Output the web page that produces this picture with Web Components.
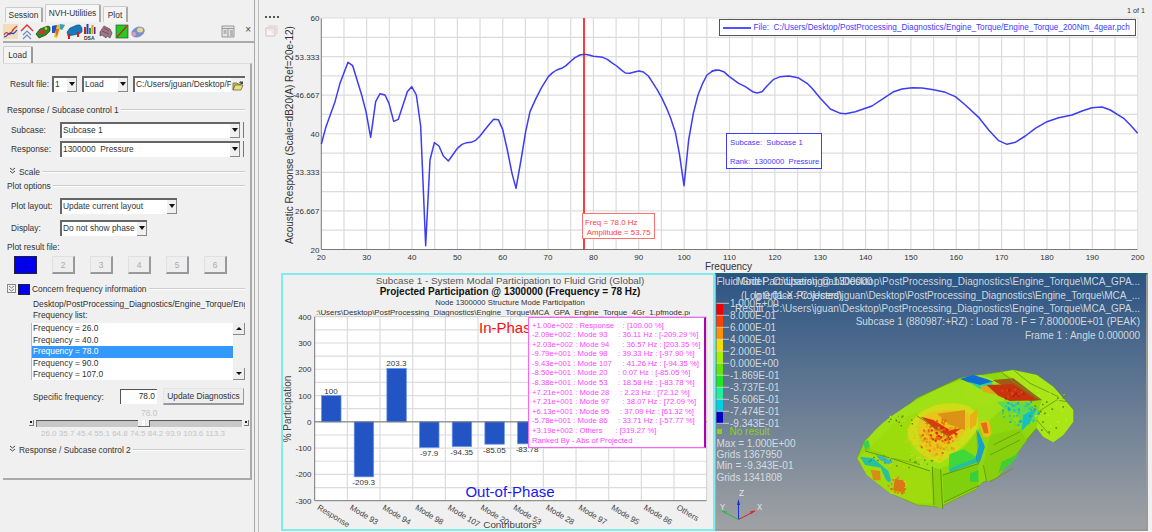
<!DOCTYPE html>
<html>
<head>
<meta charset="utf-8">
<title>NVH Utilities</title>
<style>
  html, body { margin: 0; height: 532px; overflow: hidden; background: #f0f0f0; }
  body { font-family: "Liberation Sans", Arial, sans-serif; font-size: 8.400px; color: #333; }
</style>
</head>
<body>
<hw-app>
  <hw-sidebar slot="side">
    <hw-field style="margin:12px 0 0 7px" label-width="42">Result file:
      <div slot="control" style="display:flex;gap:5px">
        <hw-select style="width:25px">1</hw-select>
        <hw-select style="width:46px">Load</hw-select>
        <hw-file-input style="width:112px">C:/Users/jguan/Desktop/P</hw-file-input>
      </div>
    </hw-field>
    <hw-group style="margin-top:12px">Response / Subcase control 1</hw-group>
    <hw-field style="margin:6px 0 0 8px" label-width="49">Subcase:
      <hw-select slot="control" ext style="width:180px">Subcase 1</hw-select>
    </hw-field>
    <hw-field style="margin:3px 0 0 8px" label-width="49">Response:
      <hw-select slot="control" ext style="width:180px">1300000&nbsp; Pressure</hw-select>
    </hw-field>
    <hw-group collapsed style="margin-top:9px">Scale</hw-group>
    <hw-group style="margin-top:2px">Plot options</hw-group>
    <hw-field style="margin:6px 0 0 8px" label-width="49">Plot layout:
      <hw-select slot="control" style="width:117px">Update current layout</hw-select>
    </hw-field>
    <hw-field style="margin:6px 0 0 8px" label-width="49">Display:
      <hw-select slot="control" style="width:87px">Do not show phase</hw-select>
    </hw-field>
    <hw-group style="margin-top:5px" plain>Plot result file:</hw-group>
    <hw-result-buttons style="margin-top:3px"></hw-result-buttons>
    <hw-group checkable style="margin-top:9px">Concern frequency information</hw-group>
    <hw-clipped style="margin:4px 0 0 30px;width:212px">Desktop/PostProcessing_Diagnostics/Engine_Torque/Eng</hw-clipped>
    <hw-clipped style="margin:0 0 0 30px;height:10px;line-height:10px;width:100px">Frequency list:</hw-clipped>
    <hw-freq-list style="margin:3px 0 0 28px"></hw-freq-list>
    <hw-specific-row style="margin:8px 0 0 30px"></hw-specific-row>
    <hw-freq-slider style="margin:3px 0 0 26px"></hw-freq-slider>
    <hw-group collapsed style="margin-top:5px">Response / Subcase control 2</hw-group>
  </hw-sidebar>
  <hw-response-plot slot="top"></hw-response-plot>
  <hw-participation-plot slot="left"></hw-participation-plot>
  <hw-contour-view slot="right"></hw-contour-view>
</hw-app>

<script>
class HwElement extends HTMLElement {
  constructor() {
    super();
    this.attachShadow({ mode: 'open' }).innerHTML = this.render();
  }
  render() { return ''; }
}

const toolbarIcons = `
  <svg width="150" height="17" viewBox="0 0 150 17">
    <rect x="3" y="1" width="15" height="15" fill="#f3dcb8"/>
    <path d="M4 12c3-6 5 2 7-2s3-5 6-7" fill="none" stroke="#e03020" stroke-width="1.2"/>
    <path d="M4 14c3 0 5-5 7-4s3 1 6-3" fill="none" stroke="#2040d0" stroke-width="1.2"/>
    <path d="M21 8l6-6 6 6" fill="none" stroke="#d83030" stroke-width="1.4"/>
    <path d="M23 12l4-4 4 4M23 16l4-4 4 4" fill="none" stroke="#7088c8" stroke-width="1.2"/>
    <path d="M36 11l4-5 8-3 2 1v4l-4 4-7 3z" fill="#2f8a22" stroke="#164010" stroke-width=".7"/>
    <ellipse cx="42" cy="9" rx="3" ry="2" fill="#d83030"/><circle cx="46" cy="5.500" r="1.200" fill="#e8d020"/>
    <path d="M52 3l9-2 4 1-3 5-2-1-3 9-3-1 1-5-3 0z" fill="#e8c020"/>
    <path d="M52 3l5-1-2 8-3 0z" fill="#2050d0"/><path d="M60 1l5 1-3 5-2-1z" fill="#30a0d0"/><path d="M56 6l3 0-2 7-1-1z" fill="#e07010"/>
    <path d="M67 9l3-4 7-3 3 0 2 3 0 4-3 2-11 2z" fill="#1878b8" stroke="#0a4a80" stroke-width=".6"/>
    <rect x="68" y="11" width="2" height="5" fill="#d02020"/><rect x="77" y="9" width="2" height="5" fill="#d02020"/>
    <rect x="84" y="4" width="2" height="7" fill="#d02020"/><rect x="86.500" y="1" width="2" height="10" fill="#2040c0"/><rect x="89" y="5" width="2" height="6" fill="#20a040"/><rect x="91.500" y="2" width="2" height="9" fill="#e0a010"/><rect x="94" y="4" width="1.500" height="7" fill="#6020a0"/>
    <text x="84" y="16.500" font-size="5" font-weight="700" fill="#333" font-family="Liberation Sans">DSA</text>
    <path d="M100 9l4-6 6 3 2 4-2 5-3-2-1 2-4-3-2 1z" fill="#8a7f88" stroke="#503040" stroke-width=".6"/>
    <path d="M102 8l7 3M104 5l5 3" stroke="#c03040" stroke-width="1"/>
    <rect x="116" y="2" width="12" height="13" fill="#22cc22" stroke="#333" stroke-width=".6"/><path d="M117 14L127 3" stroke="#d02020" stroke-width="1.200"/>
    <ellipse cx="138" cy="9" rx="7" ry="5" fill="#7a90c8" transform="rotate(-25 138 9)"/>
    <ellipse cx="140" cy="7" rx="3" ry="2.500" fill="#e8d890"/><ellipse cx="134" cy="11" rx="2" ry="2" fill="#e0a0b0"/>
  </svg>`;

class HwSidebar extends HwElement {
  render() {
    return `
    <style>
      :host { display: block; height: 532px; font-size: 8.400px; color: #333; position: relative; }
      .tabs { display: flex; align-items: flex-end; gap: 2px; height: 22px; padding-left: 5px; box-sizing: border-box; }
      .tab { border: 1px solid #ccc; border-bottom: 0; border-right: 2px solid #aaa; border-radius: 2px 2px 0 0; background: #f4f4f4; box-sizing: border-box; font-size: 8.400px; white-space: nowrap; text-align: center; }
      .tab.s { width: 38px; height: 15px; line-height: 15px; }
      .tab.n { width: 56px; height: 18px; line-height: 17px; background: #f7f7f7; }
      .tab.p { width: 25px; height: 16px; line-height: 16px; }
      .toolbar { height: 19px; width: 250px; border-bottom: 2px solid #aaa; margin-left: 3px; display: flex; align-items: center; justify-content: space-between; padding-right: 2px; box-sizing: content-box; }
      .toolbar svg { display: block; margin-left: -3px; }
      .tool-end { display: flex; align-items: center; gap: 10px; padding-right: 2px; }
      .close { font-size: 10px; color: #444; line-height: 10px; margin-top: -4px; }
      .loadtab { margin: 3px 0 0 3px; width: 30px; height: 17px; line-height: 17px; text-align: center; border: 1px solid #ccc; border-bottom: 0; border-right: 2px solid #999; box-sizing: border-box; border-radius: 2px 2px 0 0; background: #f4f4f4; }
      .frame { margin-left: 3px; width: 249px; height: 417px; box-sizing: border-box; border-top: 1px solid #ddd; border-right: 2px solid #aaa; border-bottom: 2px solid #aaa; display: flex; flex-direction: column; padding-right: 5px; }
      .rails { position: absolute; left: 254px; top: 0; width: 5px; height: 532px; border-left: 1px solid #aaa; border-right: 1px solid #bbb; box-sizing: border-box; }
    </style>
    <div class="tabs">
      <div class="tab s">Session</div>
      <div class="tab n">NVH-Utilities</div>
      <div class="tab p">Plot</div>
    </div>
    <div class="toolbar">
      ${toolbarIcons}
      <div class="tool-end">
        <svg width="14" height="13" viewBox="0 0 14 13"><path d="M1 1h12v11H1z" fill="#e4e4e4" stroke="#999"/><path d="M1 3.500h12M7 3.500V12" stroke="#999"/><path d="M9 6h3M9 8h3M9 10h3M2.500 6h3M2.500 8h3" stroke="#888"/></svg>
        <span class="close">×</span>
      </div>
    </div>
    <div class="loadtab">Load</div>
    <div class="frame"><slot></slot></div>
    <div class="rails"></div>`;
  }
}

class HwField extends HwElement {
  render() {
    const w = this.getAttribute('label-width') || 49;
    return `
    <style>
      :host { display: flex; align-items: center; height: 16px; }
      .label { width: ${w}px; flex: none; white-space: nowrap; }
    </style>
    <span class="label"><slot></slot></span>
    <slot name="control"></slot>`;
  }
}

class HwSelect extends HwElement {
  render() {
    return `
    <style>
      :host { display: inline-flex; height: 16px; box-sizing: border-box; background: #fff; border-top: 2px solid #666; border-left: 2px solid #666; white-space: nowrap; overflow: hidden; line-height: 13px; padding-left: 1px; flex: none; }
      :host([ext]) { box-shadow: 3px 0 0 #f0f0f0, 4px 0 0 #777; overflow: visible; }
      .t { flex: 1; overflow: hidden; }
      .b { width: 10px; flex: none; background: #f0f0f0; border-right: 1px solid #888; border-bottom: 1px solid #888; position: relative; box-sizing: border-box; }
      .b::after { content: ""; position: absolute; left: 2px; top: 4px; border: 3px solid transparent; border-top: 4px solid #111; border-bottom: 0; }
    </style>
    <span class="t"><slot></slot></span><span class="b"></span>`;
  }
}

class HwFileInput extends HwElement {
  render() {
    return `
    <style>
      :host { display: inline-flex; height: 16px; box-sizing: border-box; background: #fff; border-top: 2px solid #666; border-left: 2px solid #666; white-space: nowrap; overflow: hidden; line-height: 13px; padding-left: 1px; flex: none; }
      .t { flex: 1; overflow: hidden; }
      .b { width: 14px; flex: none; background: #f0f0f0; display: flex; align-items: center; justify-content: center; }
    </style>
    <span class="t"><slot></slot></span>
    <span class="b"><svg width="12" height="11" viewBox="0 0 12 11"><path d="M1 3h4l1 1h3v2H3L1 10z" fill="#d8c040" stroke="#555" stroke-width=".7"/><path d="M1 10l2-5h8l-2 5z" fill="#f0e070" stroke="#555" stroke-width=".7"/><path d="M7 3c1-2 2-2 3-1l1-1v3H8l1-1c-1-.5-1 0-2 0z" fill="#444"/></svg></span>`;
  }
}

class HwGroup extends HwElement {
  render() {
    const chev = this.hasAttribute('collapsed')
      ? '<svg class="lead" width="7" height="8" viewBox="0 0 7 8"><path d="M1 1l2.500 2L6 1M1 4l2.500 2L6 4" fill="none" stroke="#444"/></svg>' : '';
    const check = this.hasAttribute('checkable')
      ? '<span class="ck"><svg width="7" height="7" viewBox="0 0 7 7"><path d="M1 1l2.500 2L6 1M1 4l2.500 2L6 4" fill="none" stroke="#666" stroke-width=".8"/></svg></span><span class="sw"></span>' : '';
    return `
    <style>
      :host { display: flex; align-items: center; height: 12px; padding-left: 4px; white-space: nowrap; }
      .lead { margin: -2px 3px 0 2px; }
      .ck { width: 7px; height: 7px; border: 1px solid #888; margin-right: 2px; display: flex; margin-top: -1px; }
      .sw { width: 10px; height: 9px; background: #0000f0; border: 1px solid #223; margin-right: 2px; }
      .line { flex: 1; height: 0; border-top: 1px solid #ccc; border-bottom: 1px solid #fff; margin-left: 2px; }
    </style>
    ${chev}${check}<slot></slot>${this.hasAttribute('plain') ? '' : '<span class="line"></span>'}`;
  }
}

class HwResultButtons extends HwElement {
  render() {
    const btns = [1, 2, 3, 4, 5, 6].map((n) => `<span class="b${n === 1 ? ' on' : ''}">${n}</span>`).join('');
    return `
    <style>
      :host { display: flex; gap: 15px; padding-left: 11px; }
      .b { width: 23px; height: 18px; line-height: 17px; text-align: center; box-sizing: border-box; background: #eee; border: 1px solid #e0e0e0; border-right: 2px solid #999; border-bottom: 2px solid #999; color: #aaa; }
      .b.on { background: #0000f0; color: #000070; border: 1px solid #223; }
    </style>${btns}`;
  }
}

class HwClipped extends HwElement {
  render() {
    return `<style>:host { display: block; height: 11px; line-height: 11px; overflow: hidden; white-space: nowrap; }</style><slot></slot>`;
  }
}

class HwFreqList extends HwElement {
  render() {
    const items = ['26.0', '40.0', '78.0', '90.0', '107.0']
      .map((f) => `<div class="i${f === '78.0' ? ' on' : ''}">Frequency = ${f}</div>`).join('');
    return `
    <style>
      :host { display: flex; width: 214px; height: 57px; background: #fff; border-left: 1px solid #bbb; box-sizing: border-box; }
      .items { flex: 1; }
      .i { height: 11.500px; line-height: 11.500px; padding-left: 1px; }
      .on { background: #3399ff; color: #fff; }
      .sb { width: 12px; background: #f0f0f0; display: flex; flex-direction: column; justify-content: space-between; }
      .arr { height: 12px; background: #eee; border-right: 1px solid #888; border-bottom: 1px solid #888; box-sizing: border-box; position: relative; }
      .arr::after { content: ""; position: absolute; left: 3px; top: 4px; border: 3px solid transparent; }
      .up::after { border-bottom: 3px solid #111; border-top: 0; }
      .dn::after { border-top: 3px solid #111; border-bottom: 0; }
    </style>
    <div class="items">${items}</div>
    <div class="sb"><div class="arr up"></div><div class="arr dn"></div></div>`;
  }
}

class HwSpecificRow extends HwElement {
  render() {
    return `
    <style>
      :host { display: flex; align-items: center; height: 17px; }
      .l { width: 87px; }
      .v { width: 37px; height: 15px; box-sizing: border-box; line-height: 13px; text-align: right; padding-right: 2px; background: #fff; border-top: 1px solid #555; border-left: 1px solid #555; }
      .btn { margin-left: 6px; width: 81px; height: 17px; line-height: 15px; text-align: center; box-sizing: border-box; background: #eee; border: 1px solid #e4e4e4; border-right: 1px solid #999; border-bottom: 2px solid #999; white-space: nowrap; }
    </style>
    <span class="l">Specific frequency:</span><span class="v">78.0</span><span class="btn">Update Diagnostics</span>`;
  }
}

class HwFreqSlider extends HwElement {
  render() {
    const ticks = ['26.0', '35.7', '45.4', '55.1', '64.8', '74.5', '84.2', '93.9', '103.6', '113.3']
      .map((t) => `<span>${t}</span>`).join('');
    return `
    <style>
      :host { display: block; width: 220px; color: #c4c4c4; }
      .cur { height: 11px; line-height: 11px; padding-left: 112px; }
      .track { display: flex; align-items: center; gap: 2px; height: 8px; }
      .ar { width: 5px; height: 6px; background: #eee; border-right: 1px solid #777; border-bottom: 1px solid #777; box-sizing: border-box; position: relative; }
      .ar::after { content: ""; position: absolute; left: 1px; top: 1px; border: 1.500px solid #222; }
      .bar { flex: 1; height: 7px; background: #c8c8c8; border-top: 1px solid #555; border-left: 1px solid #777; box-sizing: border-box; position: relative; }
      .thumb { position: absolute; left: 101px; top: -1px; width: 12px; height: 7px; background: linear-gradient(90deg, #eee 40%, #fff 40%, #fff 60%, #999 60%, #eee 70%); border-right: 1px solid #666; border-bottom: 1px solid #666; box-sizing: border-box; }
      .ticks { display: flex; justify-content: space-between; width: 184px; margin: 2px 0 0 12px; height: 10px; line-height: 10px; font-size: 8px; }
    </style>
    <div class="cur">78.0</div>
    <div class="track"><span class="ar"></span><div class="bar"><span class="thumb"></span></div><span class="ar"></span></div>
    <div class="ticks">${ticks}</div>`;
  }
}

// curve traced from the reference, in 3x crop coordinates
const curveLeft = [[124,432],[138,380],[165,305],[180,250],[204,187],[218,197],[245,285],[258,335],[272,412],[287,305],[300,281],[315,285],[327,310],[341,364],[355,358],[368,318],[382,275],[395,260],[409,285],[422,378],[437,737],[450,480],[463,428],[477,438],[490,468],[505,483],[518,465],[532,445],[546,433],[560,428],[573,427],[587,421],[600,408],[614,390],[628,373],[641,358],[655,359],[668,388],[682,450],[696,520],[708,565],[723,480],[737,395],[750,335],[768,295],[785,262],[805,230],[818,218],[830,210],[845,205],[858,197],[873,183],[885,173],[900,165],[913,163],[927,165],[940,169],[955,170],[968,172],[982,178],[995,188],[1010,198],[1022,208],[1036,219],[1050,220],[1063,216],[1077,213],[1090,216],[1105,228],[1118,248],[1131,268],[1145,293],[1160,325],[1172,355],[1186,397],[1198,460],[1212,557],[1226,420],[1240,340],[1254,285],[1268,250],[1281,225],[1295,215],[1308,210]];
const curveRight = [[0,213],[20,210],[35,215],[52,230],[80,250],[100,260],[122,275],[135,279],[150,275],[165,258],[185,238],[205,230],[230,228],[258,233],[285,250],[300,265],[325,295],[355,327],[385,340],[400,341],[430,335],[460,325],[480,318],[510,298],[545,275],[570,267],[600,263],[630,264],[665,269],[700,277],[730,290],[760,315],[800,352],[830,390],[860,422],[885,433],[910,427],[940,408],[970,385],[1005,365],[1040,353],[1080,345],[1110,333],[1140,323],[1170,321],[1195,330],[1235,355],[1255,375],[1277,400]];

class HwResponsePlot extends HwElement {
  render() {
    const x0 = 321.3, x1 = 1137.7, y0 = 18, y1 = 249.5;
    let grid = '';
    for (let f = 25; f < 200; f += 5) {
      const x = x0 + (f - 20) * (x1 - x0) / 180;
      grid += `<line x1="${x}" x2="${x}" y1="${y0}" y2="${y1}"/>`;
    }
    for (let i = 1; i < 12; i++) {
      const y = y0 + i * (y1 - y0) / 12;
      grid += `<line x1="${x0}" x2="${x1}" y1="${y}" y2="${y}"/>`;
    }
    let xLabels = '';
    for (let f = 20; f <= 200; f += 10) {
      xLabels += `<text x="${x0 + (f - 20) * (x1 - x0) / 180}" y="260" text-anchor="middle">${f}</text>`;
    }
    const yLabels = ['60', '53.333', '46.667', '40', '33.333', '26.667', '20']
      .map((t, i) => `<text x="319.500" y="${y0 + 3 + i * (y1 - y0) / 6}" text-anchor="end">${t}</text>`).join('');
    const pts = curveLeft.map(([x, y]) => `${280 + x / 3},${y / 3}`)
      .concat(curveRight.map(([x, y]) => `${712 + x / 3},${y / 3}`)).join(' ');
    return `
    <style>
      :host { display: block; position: relative; height: 273px; font-family: "Liberation Sans", Arial, sans-serif; }
      svg { display: block; font-size: 8px; fill: #333; }
      .grid line { stroke: #dcdcdc; stroke-width: 1.200; }
      .legend { position: absolute; left: 437.500px; top: 19px; width: 417px; height: 17px; box-sizing: border-box; background: #fff; border: 1px solid #555; color: #3c3cff; font-size: 8.200px; line-height: 15px; display: flex; align-items: center; white-space: nowrap; }
      .legend i { width: 28px; height: 2px; background: #5050ff; margin: 0 3px 0 3px; }
      .note { position: absolute; left: 445px; top: 133px; width: 96px; height: 36px; box-sizing: border-box; background: #fff; border: 1px solid #3c3cff; color: #3c3cff; font-size: 7.700px; padding: 3.500px 3px; line-height: 9.500px; white-space: pre; }
      .marker { position: absolute; left: 301px; top: 213px; width: 73px; height: 26px; box-sizing: border-box; background: #fff; border: 1px solid #ff7070; color: #ff4040; font-size: 7.900px; padding: 4px 0 0 2px; line-height: 9.500px; white-space: pre; }
    </style>
    <svg width="871" height="273" viewBox="281 0 871 273">
      <rect x="${x0}" y="${y0}" width="${x1 - x0}" height="${y1 - y0}" fill="#fff"/>
      <g class="grid">${grid}</g>
      <path d="M${x0} ${y0}V${y1}H${x1}" fill="none" stroke="#777"/>
      <path d="M${x0} ${y0}H${x1}V${y1}" fill="none" stroke="#ddd"/>
      <polyline points="${pts}" fill="none" stroke="#3c3cf5" stroke-width="1.500" stroke-linejoin="round"/>
      <line x1="584" x2="584" y1="${y0}" y2="${y1}" stroke="#f01010" stroke-width="1.600"/>
      ${yLabels}${xLabels}
      <text x="728.500" y="270" text-anchor="middle" font-size="10">Frequency</text>
      <text x="1127" y="12.500" font-size="7.200">1 of 1</text>
      <text transform="translate(293 135) rotate(-90)" text-anchor="middle" font-size="10">Acoustic Response (Scale=dB20(A) Ref=20e-12)</text>
    </svg>
    <div class="legend"><i></i>File:&nbsp; C:/Users/Desktop/PostProcessing_Diagnostics/Engine_Torque/Engine_Torque_200Nm_4gear.pch</div>
    <div class="note">Subcase:  Subcase 1

Rank:  1300000  Pressure</div>
    <div class="marker">Freq = 78.0 Hz
 Amplitude = 53.75</div>`;
  }
}

const contributors = [
  ['Response', 100, '100'], ['Mode 93', -209.3, '-209.3'], ['Mode 94', 203.3, '203.3'],
  ['Mode 98', -97.9, '-97.9'], ['Mode 107', -94.35, '-94.35'], ['Mode 20', -85.05, '-85.05'],
  ['Mode 53', -83.78, '-83.78'], ['Mode 28', 72.12, ''], ['Mode 97', 72.09, ''],
  ['Mode 95', 61.32, ''], ['Mode 86', -57.77, ''], ['Others', 319.27, ''],
];

class HwParticipationPlot extends HwElement {
  render() {
    const x0 = 314.7, x1 = 706.7, y0 = 316.7, y1 = 500.7;
    const step = (x1 - x0) / 12;
    const yOf = (v) => y0 + (400 - v) * (y1 - y0) / 700;
    let grid = '';
    let ticks = '';
    for (let i = 1; i < 12; i++) {
      grid += `<line x1="${x0 + i * step}" x2="${x0 + i * step}" y1="${y0}" y2="${y1}"/>`;
    }
    for (let v = 350; v > -300; v -= 50) {
      grid += `<line x1="${x0}" x2="${x1}" y1="${yOf(v)}" y2="${yOf(v)}"/>`;
    }
    for (let v = 400; v >= -300; v -= 100) {
      ticks += `<text x="311.500" y="${yOf(v) + 3}" text-anchor="end">${v}</text>`;
    }
    const bars = contributors.map(([name, v, label], i) => {
      if (i > 6) return '';
      const cx = x0 + (i + 0.5) * step;
      const top = Math.min(yOf(v), yOf(0));
      const h = Math.abs(yOf(v) - yOf(0));
      const ly = v > 0 ? top - 2 : top + h + 8.500;
      return `<rect x="${cx - 9.500}" y="${top}" width="19.500" height="${h}" fill="#2254c4" stroke="#6a98e8" stroke-width=".7"/>
        <text x="${cx}" y="${ly}" text-anchor="middle">${label}</text>`;
    }).join('');
    const names = contributors.map(([name], i) => {
      const x = x0 + i * step + 2;
      return `<text transform="translate(${x} 509) rotate(31)" font-size="8" fill="#444">${name}</text>`;
    }).join('');
    return `
    <style>
      :host { display: block; position: relative; height: 258px; box-sizing: border-box; border: 2px solid #80ecee; font-family: "Liberation Sans", Arial, sans-serif; overflow: hidden; }
      svg { display: block; font-size: 8px; fill: #333; }
      .grid line { stroke: #dcdcdc; stroke-width: 1.200; }
      .box { position: absolute; left: 245px; top: 42px; width: 178px; height: 131px; box-sizing: border-box; background: #fff; border: 1px solid #ff60ff; border-right: 2px solid #b000b0; color: #ff44ff; font-size: 7.700px; line-height: 9.600px; padding: 2.500px 0 0 3px; white-space: pre; overflow: hidden; }
    </style>
    <svg width="430" height="254" viewBox="283 275 430 254">
      <defs><clipPath id="pathclip"><rect x="283" y="306" width="407" height="12"/></clipPath></defs>
      <rect x="${x0}" y="${y0}" width="${x1 - x0}" height="${y1 - y0}" fill="#fff"/>
      <g class="grid">${grid}</g>
      <text x="510" y="283.500" text-anchor="middle" font-size="9.850" fill="#555">Subcase 1 - System Modal Participation to Fluid Grid (Global)</text>
      <text x="510" y="294.800" text-anchor="middle" font-size="10" font-weight="700" fill="#111">Projected Participation @ 1300000 (Frequency = 78 Hz)</text>
      <text x="510" y="305" text-anchor="middle" font-size="7.700">Node 1300000 Structure Mode Participation</text>
      <text x="316" y="315" font-size="7.900" clip-path="url(#pathclip)">:\\Users\\Desktop\\PostProcessing_Diagnostics\\Engine_Torque\\MCA_GPA_Engine_Torque_4Gr_1.pfmode.pch</text>
      <path d="M${x0} ${y0}V${y1}H${x1}" fill="none" stroke="#777"/>
      <path d="M${x0} ${y0}H${x1}V${y1}" fill="none" stroke="#ccc"/>
      ${bars}
      <line x1="${x0}" x2="${x1}" y1="${yOf(0)}" y2="${yOf(0)}" stroke="#777"/>
      ${ticks}
      <text x="479" y="332.500" font-size="15" fill="#f01010">In-Phase</text>
      <text x="510" y="496.500" text-anchor="middle" font-size="15" fill="#1818f0">Out-of-Phase</text>
      ${names}
      <text x="510" y="527.500" text-anchor="middle" font-size="9.800" fill="#444">Contributors</text>
      <text transform="translate(291 409) rotate(-90)" text-anchor="middle" font-size="10" fill="#444">% Participation</text>
    </svg>
    <div class="box">+1.00e+002 : Response    : [100.00 %]
-2.09e+002 : Mode 93     : 36.11 Hz : [-209.29 %]
+2.03e+002 : Mode 94      : 36.57 Hz : [203.35 %]
-9.79e+001 : Mode 98     : 39.33 Hz : [-97.90 %]
-9.43e+001 : Mode 107     : 41.26 Hz : [-94.35 %]
-8.50e+001 : Mode 20     : 0.07 Hz : [-85.05 %]
-8.38e+001 : Mode 53     : 18.58 Hz : [-83.78 %]
+7.21e+001 : Mode 28     : 2.23 Hz : [72.12 %]
+7.21e+001 : Mode 97      : 38.07 Hz : [72.09 %]
+6.13e+001 : Mode 95     : 37.09 Hz : [61.32 %]
-5.78e+001 : Mode 86     : 33.71 Hz : [-57.77 %]
+3.19e+002 : Others      : [319.27 %]
Ranked By - Abs of Projected</div>`;
  }
}

// speckle for the contour blotches, same dots on every run
function speckle(seed, count, cx, cy, rx, ry, colors, size = 6) {
  let s = seed;
  const rnd = () => { s = (s * 16807) % 2147483647; return s / 2147483647; };
  let out = '';
  for (let i = 0; i < count; i++) {
    const a = rnd() * Math.PI * 2;
    const r = Math.sqrt(rnd());
    const c = colors[Math.floor(rnd() * colors.length)];
    out += `<rect x="${(cx + Math.cos(a) * r * rx).toFixed(1)}" y="${(cy + Math.sin(a) * r * ry).toFixed(1)}" width="${size}" height="${size}" fill="${c}"/>`;
  }
  return out;
}

const carFront = `
  <g transform="translate(850 365) scale(.33333)">
    <path d="M45 240C60 200 120 150 210 100C280 60 350 30 420 40L470 120 385 195 300 300 240 320 130 280Z" fill="#a0e012"/>
    <path d="M60 250L130 280 210 300 170 220 205 140 130 175Z" fill="#9cdc10"/>
    <path d="M172 205C180 150 240 115 300 115C350 115 390 130 385 185C360 230 320 260 270 295C225 285 185 250 172 205Z" fill="#cfdc14"/>
    ${speckle(11, 130, 250, 215, 85, 78, ['#e8d018', '#b8dc14', '#e8c018'])}
    <path d="M205 170C230 135 300 125 355 145L360 180C330 220 290 250 250 275C225 250 205 210 205 170Z" fill="#e8c41a"/>
    <path d="M262 146L345 135 345 195 295 178Z" fill="#dc9214"/>
    ${speckle(23, 130, 262, 215, 60, 55, ['#e8901a', '#e86010', '#e8d018', '#e8b018'])}
    <path d="M213 155L250 165 300 195 335 190 298 214 258 195Z" fill="#e03810"/>
    ${speckle(37, 50, 275, 205, 44, 22, ['#e02808', '#e86010', '#e8901a'])}
    <path d="M298 268L340 252 378 275 330 300 296 312Z" fill="#40d838"/>
    <path d="M296 312L376 278 384 292 300 322Z" fill="#28c098"/>
    <path d="M384 195L402 240 386 300 376 280 388 240Z" fill="#1898d8"/>
    <path d="M392 172L420 170 428 215 406 216Z" fill="#e8b018"/>
    <path d="M400 180L416 180 420 205 408 205Z" fill="#e06818"/>
    <path d="M22 280L45 258 130 282 240 320 248 415 200 415 120 385 50 330Z" fill="#a0dc10"/>
    <path d="M30 275L70 280 115 318 128 362 108 345 92 308 45 300Z" fill="#28c0a0"/>
    <path d="M40 232L55 225 60 245 45 255Z" fill="#38d050"/>
    <path d="M62 314L90 318 92 346 70 346Z" fill="#d88c18"/>
    ${speckle(71, 30, 140, 360, 28, 28, ['#e08818', '#d8c818', '#e06010'])}
    <path d="M134 342L160 346 165 385 130 376Z" fill="#d87818"/>
    <path d="M78 270L100 275 130 290 115 298 90 285Z" fill="#30b8c8"/>
    <path d="M245 305L272 314 278 432 250 420Z" fill="#8cd010"/>
    <path d="M278 330L385 296 386 362 282 412Z" fill="#80d010"/>
    <path d="M360 325L385 315 385 350 360 350Z" fill="#38d038"/>
    <path d="M45 258L130 282 240 318M247 305L252 420M272 314L278 432M278 330L385 296M282 412L386 362M200 152L260 190 296 215" fill="none" stroke="#5a8a12" stroke-width="2.500"/>
    <path d="M130 280L210 298M60 250L45 258M380 195L385 298" fill="none" stroke="#7aa812" stroke-width="2"/>
    ${speckle(83, 30, 150, 285, 100, 22, ['#4e8010', '#c0e030', '#60b010'], 4)}
    ${speckle(97, 18, 170, 160, 60, 22, ['#4e8010', '#c0e030'], 4)}
  </g>`;

const carRear = `
  <g transform="translate(970 365) scale(.33333)">
    <path d="M-25 40L30 30 70 42 110 100 40 130 -25 90Z" fill="#a4e014"/>
    <path d="M-30 42L10 30 50 42 70 50 30 62 -5 52Z" fill="#1070d0"/>
    <path d="M-5 50L30 60 65 50 70 62 30 72Z" fill="#28d0a0"/>
    <path d="M30 62L55 62 80 90 40 80Z" fill="#e0a818"/>
    <path d="M95 22L130 15 200 30 250 65 280 100 310 135 310 170 280 210 250 232 220 215 200 190 205 140 215 105 130 40Z" fill="#a8e618"/>
    <path d="M68 45L130 40 215 105 180 108Z" fill="#a05a14"/>
    <path d="M50 60L130 58 200 106 120 108 85 92Z" fill="#c83010"/>
    ${speckle(41, 16, 120, 85, 40, 16, ['#a82808', '#e04810'])}
    <path d="M80 110L130 110 190 125 205 140 180 172 155 198 145 150 100 130Z" fill="#60d850"/>
    ${speckle(53, 80, 150, 140, 55, 40, ['#30c890', '#18c8d0', '#60d850', '#a0dc18', '#10b0c8'])}
    <path d="M160 150L200 130 180 172 155 198Z" fill="#18c0c0"/>
    <path d="M0 150L25 130 18 178 0 195Z" fill="#e8b018"/>
    <path d="M25 170L55 165 65 215 40 215Z" fill="#e8c018"/>
    <path d="M32 175L50 172 56 205 42 205Z" fill="#e07018"/>
    <path d="M20 195L45 245 30 290 25 240Z" fill="#18a0d0"/>
    <path d="M60 210L150 190 170 225 130 280 80 340 50 350 40 300Z" fill="#88d010"/>
    <path d="M95 290L150 265 120 300 85 325Z" fill="#40d030"/>
    <path d="M95 22L130 50 215 105M130 15L180 55 265 95M205 140L260 105 290 110M200 165L240 210M60 270L150 225M70 240L150 200M60 350L130 310M200 190L170 225M40 300L50 350" fill="none" stroke="#6a9412" stroke-width="2.500"/>
    ${speckle(61, 30, 235, 130, 60, 70, ['#628c10', '#c0ec30'], 5)}
  </g>`;

const carShape = `
  <g filter="url(#soft)">
    <path d="M857 458L865 440 883 425 917 398 960 378 980 375 1000 372 1013 370 1037 375 1053 387 1063 398 1073 410 1073 422 1063 435 1053 442 1043 437 1037 428 1027 440 1013 458 997 478 983 482 975 490 960 497 940 507 917 505 890 493 867 475Z" fill="#8fd80e" stroke="#6a9a18" stroke-width=".6"/>
    ${carFront}
    ${carRear}
  </g>`;

class HwContourView extends HwElement {
  render() {
    const bandColors = ['#f00000', '#ff4000', '#ff9000', '#f0e000', '#a8f000', '#60e800', '#20e820', '#20f098', '#00d0e0', '#1890f0', '#0000c0'];
    const labels = ['1.000E+00', '8.000E-01', '6.000E-01', '4.000E-01', '2.000E-01', '0.000E+00', '-1.869E-01', '-3.737E-01', '-5.606E-01', '-7.474E-01', '-9.343E-01'];
    const y0 = 303.3;
    const pitch = 12;
    const bands = bandColors.slice(0, 10).map((c, i) => `<rect x="716.500" y="${y0 + i * pitch}" width="6.500" height="${pitch}" fill="${bandColors[i === 9 ? 10 : i]}"/>`).join('');
    const rows = labels.map((t, i) => {
      const y = y0 + i * pitch;
      return `<line x1="716.500" x2="729" y1="${y}" y2="${y}" stroke="#ddd" stroke-opacity=".8"/>
        <text x="730" y="${y + 3.500}">${t}</text>`;
    }).join('');
    return `
    <style>
      :host { display: block; height: 258px; box-sizing: border-box; border-right: 2px solid #999; border-bottom: 2px solid #999; border-top: 2px solid #1d5e78; border-left: 1px solid #68c8d0; overflow: hidden; background: linear-gradient(#2c5483, #a0a2a4); font-family: "Liberation Sans", Arial, sans-serif; }
      svg { display: block; font-size: 10px; fill: #dcdcdc; }
      .t { fill: #dfe3e6; fill-opacity: .92; }
    </style>
    <svg width="430" height="254" viewBox="716 275 430 254">
      <defs><filter id="soft" x="-5%" y="-5%" width="110%" height="110%"><feGaussianBlur stdDeviation=".55"/></filter></defs>
      ${carShape}
      <g class="t" font-size="10">
        <text x="716.500" y="285">Fluid Grid Participation @ 1300000</text>
        <text x="737" y="285" textLength="403">Model : C:\\Users\\jguan\\Desktop\\PostProcessing_Diagnostics\\Engine_Torque\\MCA_GPA...</text>
        <text x="741" y="298.500">(Log 0.01-X-Projected)</text>
        <text x="754" y="298.500" textLength="386">Interface : C:\\Users\\jguan\\Desktop\\PostProcessing_Diagnostics\\Engine_Torque\\MCA_...</text>
        <text x="735" y="312" textLength="405">Result : C:\\Users\\jguan\\Desktop\\PostProcessing_Diagnostics\\Engine_Torque\\MCA_GPA...</text>
        <text x="1140" y="325" text-anchor="end">Subcase 1 (880987:+RZ) : Load 78 - F = 7.800000E+01 (PEAK)</text>
        <text x="1140" y="338.500" text-anchor="end">Frame 1 : Angle 0.000000</text>
      </g>
      ${bands}
      <g class="t">${rows}</g>
      <rect x="717" y="429" width="5" height="5" fill="#90d010"/>
      <text x="729.500" y="435" fill="#90d010">No result</text>
      <g class="t">
        <text x="716.500" y="446.500">Max = 1.000E+00</text>
        <text x="716.500" y="458">Grids 1367950</text>
        <text x="716.500" y="469">Min = -9.343E-01</text>
        <text x="716.500" y="480.500">Grids 1341808</text>
      </g>
      <g fill="none" stroke-width="1">
        <path d="M738.500 519.500V501" stroke="#1830d0"/><path d="M738.500 499l-1.500 6h3z" fill="#1830d0"/>
        <path d="M738.500 519.500L755 511" stroke="#e02020"/><path d="M755 510.500l-5 1 1.500 2.500z" fill="#e02020"/>
        <path d="M738.500 519.500L722 511" stroke="#20c040"/><path d="M722 510.500l5 1-1.500 2.500z" fill="#20c040"/>
      </g>
      <g font-size="8.500" font-family="Liberation Mono" fill="#e4e4e4">
        <text x="739" y="495.500">Z</text><text x="757" y="510">X</text><text x="720" y="510">Y</text>
      </g>
    </svg>`;
  }
}

class HwApp extends HwElement {
  render() {
    return `
    <style>
      :host { display: grid; grid-template-columns: 260px 21px 434px 433px 4px; grid-template-rows: 273px 258px; height: 532px; }
      .side { grid-column: 1; grid-row: 1 / 3; }
      .strip { grid-column: 2; grid-row: 1; padding: 16px 0 0 5px; }
      .dots { width: 14px; height: 0; border-top: 2px dotted #555; margin-bottom: 7px; }
      .top { grid-column: 3 / 6; grid-row: 1; }
      .left { grid-column: 3; grid-row: 2; }
      .right { grid-column: 4; grid-row: 2; }
    </style>
    <div class="side"><slot name="side"></slot></div>
    <div class="strip">
      <div class="dots"></div>
      <svg width="14" height="12" viewBox="0 0 14 12" style="display:block"><path d="M3 1h9v8" fill="#f8ecec" stroke="#d8d0d0"/><path d="M1 3h9v8H1z" fill="#fbf3f3" stroke="#cfc0c0"/><path d="M3 5h5v4" fill="none" stroke="#e8d8d8"/></svg>
    </div>
    <div class="top"><slot name="top"></slot></div>
    <div class="left"><slot name="left"></slot></div>
    <div class="right"><slot name="right"></slot></div>`;
  }
}

customElements.define('hw-select', HwSelect);
customElements.define('hw-file-input', HwFileInput);
customElements.define('hw-field', HwField);
customElements.define('hw-group', HwGroup);
customElements.define('hw-result-buttons', HwResultButtons);
customElements.define('hw-clipped', HwClipped);
customElements.define('hw-freq-list', HwFreqList);
customElements.define('hw-specific-row', HwSpecificRow);
customElements.define('hw-freq-slider', HwFreqSlider);
customElements.define('hw-sidebar', HwSidebar);
customElements.define('hw-response-plot', HwResponsePlot);
customElements.define('hw-participation-plot', HwParticipationPlot);
customElements.define('hw-contour-view', HwContourView);
customElements.define('hw-app', HwApp);
</script>
</body>
</html>
